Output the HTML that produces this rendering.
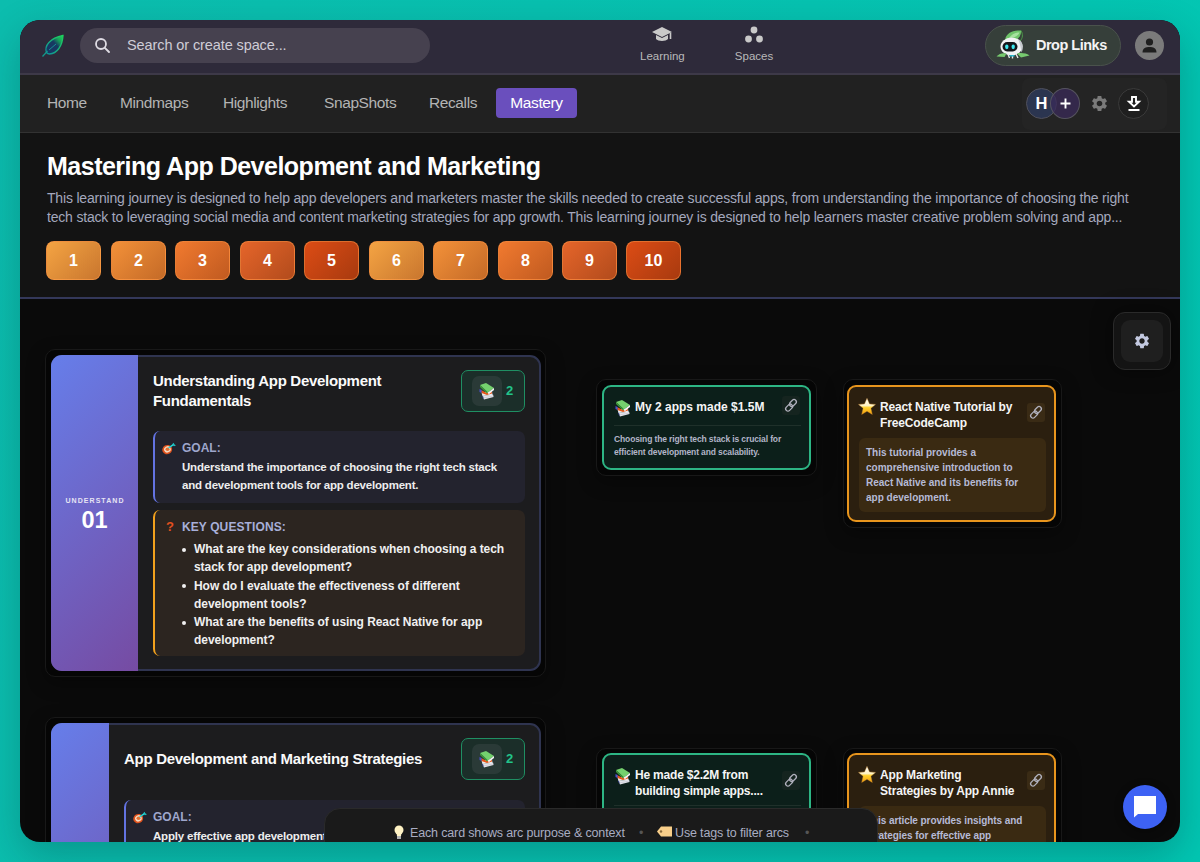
<!DOCTYPE html>
<html><head><meta charset="utf-8">
<style>
*{box-sizing:border-box;margin:0;padding:0}
html,body{width:1200px;height:862px;overflow:hidden}
body{position:relative;background:linear-gradient(100deg,#0cbdae 0%,#02c7b3 100%);font-family:"Liberation Sans",sans-serif;color:#fff}
.abs{position:absolute}
#shadow{position:absolute;left:20px;top:20px;width:1160px;height:822px;border-radius:20px;box-shadow:0 14px 40px rgba(0,20,30,.24)}
#win{position:absolute;left:0;top:0;width:1200px;height:862px;clip-path:inset(20px 20px 20px 20px round 20px);background:#0a0a0a}
#hdr{left:20px;top:20px;width:1160px;height:55px;background:#2e2a3a;border-bottom:2px solid #3d3948}
#nav{left:20px;top:75px;width:1160px;height:58px;background:#212121;border-bottom:1px solid #323232}
#ttl{left:20px;top:133px;width:1160px;height:166px;background:#131313;border-bottom:2px solid #34385a}
.search{left:80px;top:28px;width:350px;height:35px;border-radius:18px;background:#46414f}
.search span{position:absolute;left:47px;top:9px;font-size:14.5px;letter-spacing:-0.1px;color:#cfccd6}
.tab{position:absolute;top:94px;font-size:15.5px;letter-spacing:-0.4px;color:#b4b4b4}
.mastery{left:496px;top:88px;width:81px;height:30px;border-radius:4px;background:#6a4fbd;color:#fff;font-size:15.5px;letter-spacing:-0.4px;text-align:center;line-height:30px}
.hicon{position:absolute;top:50px;font-size:11.5px;color:#b9b9b9;text-align:center}
.drop{left:985px;top:25px;width:136px;height:41px;border-radius:21px;background:#363f3a;border:1px solid #4a524c}
.drop span{position:absolute;left:50px;top:11px;font-size:14.5px;letter-spacing:-0.5px;font-weight:bold;color:#f4f4f4}
.avatar{left:1135px;top:31px;width:29px;height:29px;border-radius:50%;background:#7b7b7b}
.tools{left:1022px;top:78px;width:145px;height:52px;border-radius:8px;background:#242424}
.h1{left:47px;top:152px;letter-spacing:-0.5px;font-size:25px;font-weight:bold;color:#fff;white-space:nowrap}
.desc{left:47px;top:189px;white-space:nowrap;letter-spacing:-0.19px;font-size:14px;line-height:19px;color:#a4a8bd}
.num{position:absolute;top:241px;width:55px;height:39px;border-radius:8px;font-size:16px;font-weight:bold;color:#fff;text-align:center;line-height:38px;border:1px solid rgba(255,150,70,.55)}
.n1{background:linear-gradient(135deg,#f4a443,#c9762e)}
.n2{background:linear-gradient(135deg,#f39139,#c46a27)}
.n3{background:linear-gradient(135deg,#f17a2f,#c05a20)}
.n4{background:linear-gradient(135deg,#e5652a,#b24b1c)}
.n5{background:linear-gradient(135deg,#dc4c15,#a83a0f)}

.wrap{position:absolute;border:1px solid #181818;background:#050505;border-radius:10px;box-shadow:0 6px 18px rgba(0,0,0,.35)}
.card{position:absolute;border:2px solid #2f3450;background:#1c1c1e;border-radius:11px}
.lp{position:absolute;left:-2px;top:-2px;bottom:-2px;border-radius:11px 0 0 11px;background:linear-gradient(135deg,#667eea 0%,#764ba2 100%)}
.lbl{position:absolute;font-size:7px;font-weight:bold;letter-spacing:1.05px;color:#e6e4f4;text-align:center;width:100%;padding-left:1px}
.big{position:absolute;font-size:22px;font-weight:bold;color:#fff;text-align:center;width:100%}
.ct{position:absolute;font-size:15px;font-weight:bold;line-height:19.5px;color:#fafafa;letter-spacing:-0.3px;white-space:nowrap}
.badge{position:absolute;width:64px;height:42px;border:1.5px solid #1f8f63;background:#1b2e29;border-radius:7px}
.badge .sq{position:absolute;left:10px;top:5px;width:30px;height:30px;border-radius:7px;background:#2a3a37}
.badge b{position:absolute;left:44px;top:12px;font-size:13px;color:#22c48a}
.goal{position:absolute;border-left:2px solid #6373e2;background:#23232e;border-radius:7px}
.kq{position:absolute;border-left:2px solid #f2a11d;background:#2c2520;border-radius:7px}
.gl{position:absolute;left:27px;font-size:12px;font-weight:bold;color:#9ea6cc;letter-spacing:0px}
.gt{position:absolute;left:27px;font-size:11.5px;font-weight:bold;line-height:17.6px;color:#ededed;letter-spacing:-0.2px;white-space:nowrap}
.kq ul{position:absolute;left:39px;top:30px;list-style:none;font-size:12px;font-weight:bold;line-height:18.3px;color:#f0f0f0;white-space:nowrap;letter-spacing:-0.05px}
.kq li{position:relative}
.kq li.b:before{content:"";position:absolute;left:-12px;top:7.5px;width:4px;height:4px;border-radius:50%;background:#f0f0f0}
.rg{position:absolute;border:2px solid #2db584;background:#0c1f1a;border-radius:9px;overflow:hidden}
.ro{position:absolute;border:2px solid #e8951d;background:#2b1f0f;border-radius:9px;overflow:hidden}
.rt{position:absolute;left:31px;font-size:12px;font-weight:bold;line-height:15.5px;color:#f5f5f5;white-space:nowrap;letter-spacing:0px}
.lk{position:absolute;width:18px;height:19px;border-radius:3px}
.rd{position:absolute;font-weight:bold;color:#b3b5c8;white-space:nowrap}
.bar{left:324px;top:808px;width:554px;height:60px;border-radius:16px;background:#1a1a1a;border:1px solid #2a2a2a}
.bar span{position:absolute;margin-top:1px;font-size:12.5px;letter-spacing:-0.15px;color:#a9adc2;white-space:nowrap}
</style></head><body>
<div id="shadow"></div>
<div id="win">
  <div id="hdr" class="abs"></div>
  <div id="nav" class="abs"></div>
  <div id="ttl" class="abs"></div>
  <!-- header -->
  <svg class="abs" style="left:41px;top:34px" width="24" height="24" viewBox="0 0 24 24">
    <defs><linearGradient id="lg" x1="0" y1="1" x2="1" y2="0"><stop offset="0" stop-color="#0f8f9a"/><stop offset="1" stop-color="#1ed45c"/></linearGradient>
    <linearGradient id="lf" x1="0" y1="1" x2="1" y2="0"><stop offset="0" stop-color="#173563"/><stop offset=".55" stop-color="#173a62"/><stop offset=".75" stop-color="#17a05a"/><stop offset="1" stop-color="#22d65a"/></linearGradient></defs>
    <path d="M5.5 18.5 C3 12 9 4 22 1.5 C21.5 12 16 19.5 8.5 20 C7.3 20 6.3 19.5 5.5 18.5 Z" fill="url(#lf)" stroke="url(#lg)" stroke-width="1.3"/>
    <path d="M1.5 22.5 L6.5 17" stroke="#129a8c" stroke-width="1.2"/>
    <path d="M8 16 L15 10" stroke="#1aa5a0" stroke-width=".8"/>
  </svg>
  <div class="abs search"><span>Search or create space...</span>
    <svg class="abs" style="left:13px;top:8px" width="20" height="20" viewBox="0 0 20 20"><circle cx="8" cy="8" r="5" fill="none" stroke="#dedbe3" stroke-width="1.8"/><path d="M11.8 11.8 L16 16" stroke="#dedbe3" stroke-width="1.9" stroke-linecap="round"/></svg>
  </div>
  <svg class="abs" style="left:651px;top:26px" width="22" height="18" viewBox="0 0 22 18"><path d="M11 1 L21 6 L11 11 L1 6 Z" fill="#c9c9c9"/><path d="M5 9 L5 13 C7 15.5 15 15.5 17 13 L17 9 L11 12 Z" fill="#c9c9c9"/><path d="M19.5 6.8 L19.5 13" stroke="#c9c9c9" stroke-width="1.6"/></svg>
  <div class="hicon" style="left:640px;width:44px">Learning</div>
  <svg class="abs" style="left:744px;top:26px" width="20" height="18" viewBox="0 0 20 18"><circle cx="10" cy="4" r="3.4" fill="#c9c9c9"/><circle cx="4.5" cy="13" r="3.4" fill="#c9c9c9"/><circle cx="15.5" cy="13" r="3.4" fill="#c9c9c9"/></svg>
  <div class="hicon" style="left:734px;width:40px">Spaces</div>
  <div class="abs drop"><svg class="abs" style="left:10px;top:3px" width="34" height="30" viewBox="0 0 34 30">
  <path d="M9 11 C10 4 17 1 25 1.5 C25.5 7 22 12 14 12.5 Z" fill="#6fc46a"/>
  <path d="M13 9 C16 5 19.5 3.5 23.5 3.5 C22 7 18 9 13 9Z" fill="#a6e29e"/>
  <path d="M25 1.5 C27 5 27 9 24 12" fill="none" stroke="#4f9e4c" stroke-width="1"/>
  <ellipse cx="15.5" cy="17.5" rx="11" ry="9" fill="#f1f2f4"/>
  <path d="M22 10 C27 12 28 19 25.5 23.5 C25 20 24 14 22 10Z" fill="#c6cacf"/>
  <rect x="6.5" y="13" width="15" height="9.5" rx="4.7" fill="#14171b"/>
  <ellipse cx="10.8" cy="17.8" rx="1.7" ry="2.4" fill="#3fe8ee"/><ellipse cx="17.2" cy="17.8" rx="1.7" ry="2.4" fill="#3fe8ee"/>
  <path d="M0.5 27.5 C3 24.5 7 23.5 10.5 24.5 L8.5 28 Z" fill="#77c96f"/>
  <path d="M21 24.5 C25 23.5 30 24 33.5 26.5 L25 28.5 Z" fill="#77c96f"/>
  <path d="M12 25 L13.5 29 M16.5 26 L16.5 29.5 M20 25 L22 29" stroke="#e8e8e8" stroke-width="1.4"/>
  <path d="M13.5 26.8 L18.5 26.8" stroke="#2ab3c9" stroke-width="1.6"/>
</svg><span>Drop Links</span></div>
  <div class="abs avatar"><svg class="abs" style="left:6px;top:6px" width="17" height="17" viewBox="0 0 17 17"><circle cx="8.5" cy="5" r="3.6" fill="#1f1f1f"/><path d="M1.5 15.5 C1.5 11 5 10 8.5 10 C12 10 15.5 11 15.5 15.5 Z" fill="#1f1f1f"/></svg></div>
  <!-- nav -->
  <div class="tab" style="left:47px">Home</div>
  <div class="tab" style="left:120px">Mindmaps</div>
  <div class="tab" style="left:223px">Highlights</div>
  <div class="tab" style="left:324px">SnapShots</div>
  <div class="tab" style="left:429px">Recalls</div>
  <div class="abs mastery">Mastery</div>
  <div class="abs tools"></div>
  <div class="abs" style="left:1026px;top:88px;width:31px;height:31px;border-radius:50%;background:#2b3550;border:1px solid #50505c;font-size:16.5px;font-weight:bold;color:#fff;text-align:center;line-height:29px">H</div>
  <div class="abs" style="left:1050px;top:88px;width:30px;height:31px;border-radius:50%;background:rgba(58,42,88,.75);border:1px solid #55535f"><svg class="abs" style="left:8px;top:8px" width="13" height="13" viewBox="0 0 13 13"><path d="M6.5 1.5 V11.5 M1.5 6.5 H11.5" stroke="#fff" stroke-width="1.9"/></svg></div>
  <svg class="abs" style="left:1090px;top:94px" width="19" height="19" viewBox="0 0 24 24"><path fill="#7a7a7a" d="M19.14 12.94c.04-.3.06-.61.06-.94 0-.32-.02-.64-.07-.94l2.03-1.58a.49.49 0 0 0 .12-.61l-1.920-3.32a.488.488 0 0 0-.59-.22l-2.39.96c-.5-.38-1.030-.7-1.62-.94l-.36-2.54a.484.484 0 0 0-.48-.41h-3.84c-.24 0-.43.17-.47.41l-.36 2.54c-.59.24-1.13.57-1.62.94l-2.39-.96c-.22-.08-.47 0-.59.22L2.74 8.87c-.12.21-.08.47.12.61l2.03 1.58c-.05.3-.09.63-.09.94s.02.64.07.94l-2.03 1.58a.49.49 0 0 0-.12.61l1.92 3.32c.12.22.37.29.59.22l2.39-.96c.5.38 1.03.7 1.62.94l.36 2.54c.05.24.24.41.48.41h3.84c.24 0 .44-.17.47-.41l.36-2.54c.59-.24 1.13-.56 1.62-.94l2.39.96c.22.08.47 0 .59-.22l1.92-3.32c.12-.22.07-.47-.12-.61l-2.010-1.58zM12 15.6c-1.98 0-3.6-1.62-3.6-3.600s1.62-3.6 3.6-3.6 3.6 1.62 3.6 3.6-1.62 3.6-3.6 3.6z"/></svg>
  <div class="abs" style="left:1118px;top:88px;width:31px;height:31px;border-radius:50%;background:#1f1f1f;border:1px solid #3a3a3a"><svg class="abs" style="left:7px;top:6px" width="16" height="18" viewBox="0 0 16 18"><path d="M6 2 H10 V6.8 H13 L8 11.5 L3 6.8 H6 Z" fill="none" stroke="#fff" stroke-width="1.9" stroke-linejoin="miter"/><path d="M2.5 15 H13.5" stroke="#fff" stroke-width="1.9"/></svg></div>
  <!-- title -->
  <div class="abs h1">Mastering App Development and Marketing</div>
  <div class="abs desc">This learning journey is designed to help app developers and marketers master the skills needed to create successful apps, from understanding the importance of choosing the right<br>tech stack to leveraging social media and content marketing strategies for app growth. This learning journey is designed to help learners master creative problem solving and app...</div>
  <div class="num n1" style="left:46px">1</div>
  <div class="num n2" style="left:111px">2</div>
  <div class="num n3" style="left:175px">3</div>
  <div class="num n4" style="left:240px">4</div>
  <div class="num n5" style="left:304px">5</div>
  <div class="num n1" style="left:369px">6</div>
  <div class="num n2" style="left:433px">7</div>
  <div class="num n3" style="left:498px">8</div>
  <div class="num n4" style="left:562px">9</div>
  <div class="num n5" style="left:626px">10</div>

  <!-- canvas -->
  <div class="wrap" style="left:45px;top:349px;width:501px;height:328px"></div>
  <div class="card" style="left:51px;top:355px;width:490px;height:316px">
    <div class="lp" style="width:87px"><div class="lbl" style="top:142px">UNDERSTAND</div><div class="big" style="top:152px;font-size:23.5px">01</div></div>
    <div class="ct" style="left:100px;top:14px">Understanding App Development<br>Fundamentals</div>
    <div class="badge" style="left:408px;top:13px"><div class="sq"><div style="position:absolute;left:7px;top:7px"><svg width="15" height="17" viewBox="0 0 15 17"><path d="M4 13 L14 11.5 L14.5 14 L5 16.5 Z" fill="#e4e4ea"/><path d="M3.5 12.5 L5 16.5 L4.5 16 L3 13Z" fill="#4a4fc0"/><path d="M4 15 L14.5 13" stroke="#b9b9c8" stroke-width=".5"/><path d="M2.5 9.5 L13 8.5 L13.5 12 L3.5 13 Z" fill="#e9e9ee"/><path d="M2 7 L8 10 L13 9 L13 10.5 L8 12 L2.5 10 Z" fill="#e8561a"/><path d="M0.5 6 L2.5 7 L2.5 10 L0.5 9 Z" fill="#4b4fd0"/><path d="M1 2 L7 0 L15 5 L9 9.5 Z" fill="#74d06e"/><path d="M1 2 L9 9.5 L8 10.5 L1 4 Z" fill="#3e9a3c"/><path d="M9 9.5 L15 5 L15 7 L9.5 11.5 Z" fill="#f4f4f6"/></svg></div></div><b>2</b></div>
    <div class="goal" style="left:100px;top:74px;width:372px;height:72px">
      <div style="position:absolute;left:7px;top:10px"><svg width="15" height="13" viewBox="0 0 15 13"><ellipse cx="5.2" cy="7.6" rx="5" ry="4.6" transform="rotate(-30 5.2 7.6)" fill="#e0521c"/><ellipse cx="5.4" cy="7.4" rx="3.4" ry="3.1" transform="rotate(-30 5.4 7.4)" fill="#f7d9c0"/><ellipse cx="5.5" cy="7.3" rx="2" ry="1.8" fill="#e4702f"/><path d="M6.5 6 L11 2.8" stroke="#22d8d8" stroke-width="1.5"/><path d="M10 2.5 L11.5 0.8 L12.5 2.5 L14 3.3 L12 4.2 Z" fill="#1fc2c0"/></svg></div>
      <div class="gl" style="top:10px">GOAL:</div>
      <div class="gt" style="top:28px">Understand the importance of choosing the right tech stack<br>and development tools for app development.</div>
    </div>
    <div class="kq" style="left:100px;top:153px;width:372px;height:146px">
      <div style="position:absolute;left:11px;top:9px;font-size:13px;font-weight:bold;color:#e2501e">?</div>
      <div class="gl" style="top:10px;color:#a7afd9;letter-spacing:0.1px">KEY QUESTIONS:</div>
      <ul><li class="b">What are the key considerations when choosing a tech</li><li>stack for app development?</li><li class="b">How do I evaluate the effectiveness of different</li><li>development tools?</li><li class="b">What are the benefits of using React Native for app</li><li>development?</li></ul>
    </div>
  </div>

  <div class="wrap" style="left:45px;top:717px;width:501px;height:200px"></div>
  <div class="card" style="left:51px;top:723px;width:490px;height:330px">
    <div class="lp" style="width:58px"></div>
    <div class="ct" style="left:71px;top:24px">App Development and Marketing Strategies</div>
    <div class="badge" style="left:408px;top:13px"><div class="sq"><div style="position:absolute;left:7px;top:7px"><svg width="15" height="17" viewBox="0 0 15 17"><path d="M4 13 L14 11.5 L14.5 14 L5 16.5 Z" fill="#e4e4ea"/><path d="M3.5 12.5 L5 16.5 L4.5 16 L3 13Z" fill="#4a4fc0"/><path d="M4 15 L14.5 13" stroke="#b9b9c8" stroke-width=".5"/><path d="M2.5 9.5 L13 8.5 L13.5 12 L3.5 13 Z" fill="#e9e9ee"/><path d="M2 7 L8 10 L13 9 L13 10.5 L8 12 L2.5 10 Z" fill="#e8561a"/><path d="M0.5 6 L2.5 7 L2.5 10 L0.5 9 Z" fill="#4b4fd0"/><path d="M1 2 L7 0 L15 5 L9 9.5 Z" fill="#74d06e"/><path d="M1 2 L9 9.5 L8 10.5 L1 4 Z" fill="#3e9a3c"/><path d="M9 9.5 L15 5 L15 7 L9.5 11.5 Z" fill="#f4f4f6"/></svg></div></div><b>2</b></div>
    <div class="goal" style="left:71px;top:75px;width:401px;height:72px">
      <div style="position:absolute;left:7px;top:10px"><svg width="15" height="13" viewBox="0 0 15 13"><ellipse cx="5.2" cy="7.6" rx="5" ry="4.6" transform="rotate(-30 5.2 7.6)" fill="#e0521c"/><ellipse cx="5.4" cy="7.4" rx="3.4" ry="3.1" transform="rotate(-30 5.4 7.4)" fill="#f7d9c0"/><ellipse cx="5.5" cy="7.3" rx="2" ry="1.8" fill="#e4702f"/><path d="M6.5 6 L11 2.8" stroke="#22d8d8" stroke-width="1.5"/><path d="M10 2.5 L11.5 0.8 L12.5 2.5 L14 3.3 L12 4.2 Z" fill="#1fc2c0"/></svg></div>
      <div class="gl" style="top:10px">GOAL:</div>
      <div class="gt" style="top:28px">Apply effective app development and marketing strategies</div>
    </div>
  </div>

  <div class="wrap" style="left:596px;top:379px;width:221px;height:97px"></div>
  <div class="rg" style="left:602px;top:385px;width:209px;height:85px">
    <div style="position:absolute;left:11px;top:13px"><svg width="15" height="17" viewBox="0 0 15 17"><path d="M4 13 L14 11.5 L14.5 14 L5 16.5 Z" fill="#e4e4ea"/><path d="M3.5 12.5 L5 16.5 L4.5 16 L3 13Z" fill="#4a4fc0"/><path d="M4 15 L14.5 13" stroke="#b9b9c8" stroke-width=".5"/><path d="M2.5 9.5 L13 8.5 L13.5 12 L3.5 13 Z" fill="#e9e9ee"/><path d="M2 7 L8 10 L13 9 L13 10.5 L8 12 L2.5 10 Z" fill="#e8561a"/><path d="M0.5 6 L2.5 7 L2.5 10 L0.5 9 Z" fill="#4b4fd0"/><path d="M1 2 L7 0 L15 5 L9 9.5 Z" fill="#74d06e"/><path d="M1 2 L9 9.5 L8 10.5 L1 4 Z" fill="#3e9a3c"/><path d="M9 9.5 L15 5 L15 7 L9.5 11.5 Z" fill="#f4f4f6"/></svg></div>
    <div class="rt" style="top:13px">My 2 apps made $1.5M</div>
    <div class="lk" style="left:178px;top:9px;background:#15241f"><svg width="18" height="19" viewBox="0 0 18 19" style="position:absolute;left:0;top:0"><g fill="none" stroke="#b0b0bc" stroke-width="1.3"><rect x="3.2" y="9.3" width="7.8" height="4.6" rx="2.3" transform="rotate(-45 7.1 11.6)"/><rect x="7" y="4.7" width="7.8" height="4.6" rx="2.3" transform="rotate(-45 10.9 7)"/></g></svg></div>
    <div style="position:absolute;left:10px;top:38px;width:187px;height:1px;background:#1f302a"></div>
    <div class="rd" style="left:10px;top:46px;font-size:8.5px;line-height:13.3px;letter-spacing:-0.12px">Choosing the right tech stack is crucial for<br>efficient development and scalability.</div>
  </div>

  <div class="wrap" style="left:843px;top:379px;width:219px;height:149px"></div>
  <div class="ro" style="left:847px;top:385px;width:209px;height:137px">
    <div style="position:absolute;left:9px;top:11px"><svg width="18" height="18" viewBox="0 0 18 18"><defs><linearGradient id="sg" x1="0" y1="0" x2="0" y2="1"><stop offset="0" stop-color="#ffffff"/><stop offset=".45" stop-color="#fff3c4"/><stop offset=".58" stop-color="#ffd22e"/><stop offset="1" stop-color="#f39c0c"/></linearGradient></defs><path d="M9 0.3 L11.5 5.9 L17.5 6.4 L12.9 10.3 L14.3 16.4 L9 13.3 L3.7 16.4 L5.1 10.3 L0.5 6.4 L6.5 5.9 Z" fill="url(#sg)" stroke="#c98a30" stroke-width=".4"/></svg></div>
    <div class="rt" style="top:13px;letter-spacing:-0.15px">React Native Tutorial by<br>FreeCodeCamp</div>
    <div class="lk" style="left:178px;top:16px;background:#3a2b15"><svg width="18" height="19" viewBox="0 0 18 19" style="position:absolute;left:0;top:0"><g fill="none" stroke="#b0b0bc" stroke-width="1.3"><rect x="3.2" y="9.3" width="7.8" height="4.6" rx="2.3" transform="rotate(-45 7.1 11.6)"/><rect x="7" y="4.7" width="7.8" height="4.6" rx="2.3" transform="rotate(-45 10.9 7)"/></g></svg></div>
    <div style="position:absolute;left:10px;top:51px;width:187px;height:74px;border-radius:6px;background:#3a2a12"></div>
    <div class="rd" style="left:17px;top:58px;font-size:10px;line-height:15px;color:#b6bad6">This tutorial provides a<br>comprehensive introduction to<br>React Native and its benefits for<br>app development.</div>
  </div>

  <div class="wrap" style="left:596px;top:748px;width:221px;height:120px"></div>
  <div class="rg" style="left:602px;top:753px;width:209px;height:120px">
    <div style="position:absolute;left:11px;top:13px"><svg width="15" height="17" viewBox="0 0 15 17"><path d="M4 13 L14 11.5 L14.5 14 L5 16.5 Z" fill="#e4e4ea"/><path d="M3.5 12.5 L5 16.5 L4.5 16 L3 13Z" fill="#4a4fc0"/><path d="M4 15 L14.5 13" stroke="#b9b9c8" stroke-width=".5"/><path d="M2.5 9.5 L13 8.5 L13.5 12 L3.5 13 Z" fill="#e9e9ee"/><path d="M2 7 L8 10 L13 9 L13 10.5 L8 12 L2.5 10 Z" fill="#e8561a"/><path d="M0.5 6 L2.5 7 L2.5 10 L0.5 9 Z" fill="#4b4fd0"/><path d="M1 2 L7 0 L15 5 L9 9.5 Z" fill="#74d06e"/><path d="M1 2 L9 9.5 L8 10.5 L1 4 Z" fill="#3e9a3c"/><path d="M9 9.5 L15 5 L15 7 L9.5 11.5 Z" fill="#f4f4f6"/></svg></div>
    <div class="rt" style="top:13px;letter-spacing:-0.2px">He made $2.2M from<br>building simple apps....</div>
    <div class="lk" style="left:178px;top:16px;background:#15241f"><svg width="18" height="19" viewBox="0 0 18 19" style="position:absolute;left:0;top:0"><g fill="none" stroke="#b0b0bc" stroke-width="1.3"><rect x="3.2" y="9.3" width="7.8" height="4.6" rx="2.3" transform="rotate(-45 7.1 11.6)"/><rect x="7" y="4.7" width="7.8" height="4.6" rx="2.3" transform="rotate(-45 10.9 7)"/></g></svg></div>
    <div style="position:absolute;left:10px;top:50px;width:187px;height:1px;background:#1f302a"></div>
  </div>

  <div class="wrap" style="left:843px;top:748px;width:219px;height:120px"></div>
  <div class="ro" style="left:847px;top:753px;width:209px;height:120px">
    <div style="position:absolute;left:9px;top:11px"><svg width="18" height="18" viewBox="0 0 18 18"><defs><linearGradient id="sg" x1="0" y1="0" x2="0" y2="1"><stop offset="0" stop-color="#ffffff"/><stop offset=".45" stop-color="#fff3c4"/><stop offset=".58" stop-color="#ffd22e"/><stop offset="1" stop-color="#f39c0c"/></linearGradient></defs><path d="M9 0.3 L11.5 5.9 L17.5 6.4 L12.9 10.3 L14.3 16.4 L9 13.3 L3.7 16.4 L5.1 10.3 L0.5 6.4 L6.5 5.9 Z" fill="url(#sg)" stroke="#c98a30" stroke-width=".4"/></svg></div>
    <div class="rt" style="top:13px;letter-spacing:-0.15px">App Marketing<br>Strategies by App Annie</div>
    <div class="lk" style="left:178px;top:16px;background:#3a2b15"><svg width="18" height="19" viewBox="0 0 18 19" style="position:absolute;left:0;top:0"><g fill="none" stroke="#b0b0bc" stroke-width="1.3"><rect x="3.2" y="9.3" width="7.8" height="4.6" rx="2.3" transform="rotate(-45 7.1 11.6)"/><rect x="7" y="4.7" width="7.8" height="4.6" rx="2.3" transform="rotate(-45 10.9 7)"/></g></svg></div>
    <div style="position:absolute;left:10px;top:51px;width:187px;height:74px;border-radius:6px;background:#3a2a12"></div>
    <div class="rd" style="left:17px;top:58px;font-size:10px;line-height:15px;letter-spacing:-0.08px;color:#b6bad6">This article provides insights and<br>strategies for effective app</div>
  </div>

  <div class="abs bar">
    <svg style="position:absolute;left:69px;top:16px" width="10" height="15" viewBox="0 0 10 15"><circle cx="5" cy="5" r="4.5" fill="#fff2c4"/><path d="M2.5 8 L7.5 8 L7 11 L3 11Z" fill="#fff2c4"/><rect x="3" y="11" width="4" height="3" fill="#b0b0b0"/></svg>
    <span style="left:85px;top:16px">Each card shows arc purpose &amp; context</span>
    <span style="left:314px;top:16px;color:#555">&#8226;</span>
    <svg style="position:absolute;left:332px;top:17px" width="15" height="11" viewBox="0 0 15 11"><path d="M0 5.5 L4 0.5 L15 0.5 L15 10.5 L4 10.5 Z" fill="#f8cf8a"/><circle cx="4" cy="5.5" r="1.2" fill="#8a6a3a"/></svg>
    <span style="left:350px;top:16px">Use tags to filter arcs</span>
    <span style="left:480px;top:16px;color:#555">&#8226;</span>
  </div>

  <div class="abs" style="left:1113px;top:312px;width:58px;height:58px;border-radius:12px;background:#141414;border:1px solid #2a2a2a;box-shadow:0 0 20px rgba(0,0,0,.5)">
    <div class="abs" style="left:7px;top:7px;width:42px;height:42px;border-radius:9px;background:#1f1f1f"></div>
    <svg class="abs" style="left:19px;top:19px" width="18" height="18" viewBox="0 0 24 24"><path fill="#c3c9e0" d="M19.14 12.94c.04-.3.06-.61.06-.94 0-.32-.02-.64-.07-.94l2.03-1.58a.49.49 0 0 0 .12-.61l-1.92-3.32a.488.488 0 0 0-.59-.22l-2.39.96c-.5-.38-1.03-.7-1.62-.94l-.36-2.54a.484.484 0 0 0-.48-.41h-3.84c-.24 0-.43.17-.47.41l-.36 2.54c-.59.24-1.13.57-1.62.94l-2.39-.96c-.22-.08-.47 0-.59.22L2.74 8.87c-.12.21-.08.47.12.61l2.03 1.58c-.05.3-.09.63-.09.94s.02.64.07.94l-2.03 1.58a.49.49 0 0 0-.12.61l1.92 3.32c.12.22.37.29.59.22l2.39-.96c.5.38 1.03.7 1.62.94l.36 2.54c.05.24.24.41.48.41h3.84c.24 0 .44-.17.47-.41l.36-2.54c.59-.24 1.13-.56 1.62-.94l2.39.96c.22.08.47 0 .59-.22l1.92-3.32c.12-.22.07-.47-.12-.61l-2.01-1.58zM12 15.6c-1.98 0-3.6-1.62-3.6-3.6s1.62-3.6 3.6-3.6 3.6 1.62 3.6 3.6-1.62 3.6-3.6 3.6z"/></svg>
  </div>

  <div class="abs" style="left:1123px;top:785px;width:44px;height:44px;border-radius:50%;background:#3d62f4;box-shadow:0 2px 8px rgba(0,0,0,.4)">
    <svg class="abs" style="left:11px;top:11px" width="22" height="22" viewBox="0 0 22 22"><path d="M0 0 L22 0 L22 18 L4 18 L0 21.5 Z" fill="#fff"/></svg>
  </div>
</div>
</body></html>
